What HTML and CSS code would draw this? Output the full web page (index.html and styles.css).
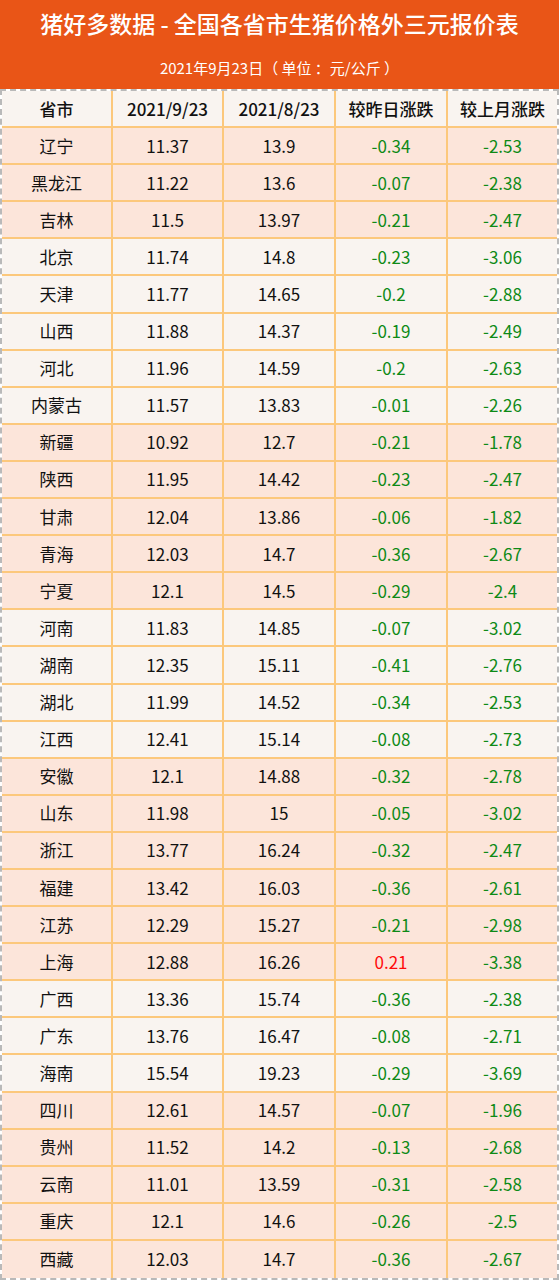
FILE: index.html
```html
<!DOCTYPE html>
<html lang="zh-CN">
<head>
<meta charset="utf-8">
<title>猪好多数据 - 全国各省市生猪价格外三元报价表</title>
<link rel="stylesheet" href="styles.css">
</head>
<body>
<div class="page">
  <header class="banner">
    <h1 class="title">猪好多数据 - 全国各省市生猪价格外三元报价表</h1>
    <p class="subtitle">2021年9月23日（ 单位 ：元/公斤 ）</p>
  </header>
  <div class="table">
    <div class="row head"><div class="cell">省市</div><div class="cell">2021/9/23</div><div class="cell">2021/8/23</div><div class="cell">较昨日涨跌</div><div class="cell">较上月涨跌</div></div>
    <div class="row pink"><div class="cell">辽宁</div><div class="cell">11.37</div><div class="cell">13.9</div><div class="cell down">-0.34</div><div class="cell down">-2.53</div></div>
    <div class="row pink"><div class="cell">黑龙江</div><div class="cell">11.22</div><div class="cell">13.6</div><div class="cell down">-0.07</div><div class="cell down">-2.38</div></div>
    <div class="row pink"><div class="cell">吉林</div><div class="cell">11.5</div><div class="cell">13.97</div><div class="cell down">-0.21</div><div class="cell down">-2.47</div></div>
    <div class="row light"><div class="cell">北京</div><div class="cell">11.74</div><div class="cell">14.8</div><div class="cell down">-0.23</div><div class="cell down">-3.06</div></div>
    <div class="row light"><div class="cell">天津</div><div class="cell">11.77</div><div class="cell">14.65</div><div class="cell down">-0.2</div><div class="cell down">-2.88</div></div>
    <div class="row light"><div class="cell">山西</div><div class="cell">11.88</div><div class="cell">14.37</div><div class="cell down">-0.19</div><div class="cell down">-2.49</div></div>
    <div class="row light"><div class="cell">河北</div><div class="cell">11.96</div><div class="cell">14.59</div><div class="cell down">-0.2</div><div class="cell down">-2.63</div></div>
    <div class="row light"><div class="cell">内蒙古</div><div class="cell">11.57</div><div class="cell">13.83</div><div class="cell down">-0.01</div><div class="cell down">-2.26</div></div>
    <div class="row pink"><div class="cell">新疆</div><div class="cell">10.92</div><div class="cell">12.7</div><div class="cell down">-0.21</div><div class="cell down">-1.78</div></div>
    <div class="row pink"><div class="cell">陕西</div><div class="cell">11.95</div><div class="cell">14.42</div><div class="cell down">-0.23</div><div class="cell down">-2.47</div></div>
    <div class="row pink"><div class="cell">甘肃</div><div class="cell">12.04</div><div class="cell">13.86</div><div class="cell down">-0.06</div><div class="cell down">-1.82</div></div>
    <div class="row pink"><div class="cell">青海</div><div class="cell">12.03</div><div class="cell">14.7</div><div class="cell down">-0.36</div><div class="cell down">-2.67</div></div>
    <div class="row pink"><div class="cell">宁夏</div><div class="cell">12.1</div><div class="cell">14.5</div><div class="cell down">-0.29</div><div class="cell down">-2.4</div></div>
    <div class="row light"><div class="cell">河南</div><div class="cell">11.83</div><div class="cell">14.85</div><div class="cell down">-0.07</div><div class="cell down">-3.02</div></div>
    <div class="row light"><div class="cell">湖南</div><div class="cell">12.35</div><div class="cell">15.11</div><div class="cell down">-0.41</div><div class="cell down">-2.76</div></div>
    <div class="row light"><div class="cell">湖北</div><div class="cell">11.99</div><div class="cell">14.52</div><div class="cell down">-0.34</div><div class="cell down">-2.53</div></div>
    <div class="row light"><div class="cell">江西</div><div class="cell">12.41</div><div class="cell">15.14</div><div class="cell down">-0.08</div><div class="cell down">-2.73</div></div>
    <div class="row pink"><div class="cell">安徽</div><div class="cell">12.1</div><div class="cell">14.88</div><div class="cell down">-0.32</div><div class="cell down">-2.78</div></div>
    <div class="row pink"><div class="cell">山东</div><div class="cell">11.98</div><div class="cell">15</div><div class="cell down">-0.05</div><div class="cell down">-3.02</div></div>
    <div class="row pink"><div class="cell">浙江</div><div class="cell">13.77</div><div class="cell">16.24</div><div class="cell down">-0.32</div><div class="cell down">-2.47</div></div>
    <div class="row pink"><div class="cell">福建</div><div class="cell">13.42</div><div class="cell">16.03</div><div class="cell down">-0.36</div><div class="cell down">-2.61</div></div>
    <div class="row pink"><div class="cell">江苏</div><div class="cell">12.29</div><div class="cell">15.27</div><div class="cell down">-0.21</div><div class="cell down">-2.98</div></div>
    <div class="row pink"><div class="cell">上海</div><div class="cell">12.88</div><div class="cell">16.26</div><div class="cell up">0.21</div><div class="cell down">-3.38</div></div>
    <div class="row light"><div class="cell">广西</div><div class="cell">13.36</div><div class="cell">15.74</div><div class="cell down">-0.36</div><div class="cell down">-2.38</div></div>
    <div class="row light"><div class="cell">广东</div><div class="cell">13.76</div><div class="cell">16.47</div><div class="cell down">-0.08</div><div class="cell down">-2.71</div></div>
    <div class="row light"><div class="cell">海南</div><div class="cell">15.54</div><div class="cell">19.23</div><div class="cell down">-0.29</div><div class="cell down">-3.69</div></div>
    <div class="row pink"><div class="cell">四川</div><div class="cell">12.61</div><div class="cell">14.57</div><div class="cell down">-0.07</div><div class="cell down">-1.96</div></div>
    <div class="row pink"><div class="cell">贵州</div><div class="cell">11.52</div><div class="cell">14.2</div><div class="cell down">-0.13</div><div class="cell down">-2.68</div></div>
    <div class="row pink"><div class="cell">云南</div><div class="cell">11.01</div><div class="cell">13.59</div><div class="cell down">-0.31</div><div class="cell down">-2.58</div></div>
    <div class="row pink"><div class="cell">重庆</div><div class="cell">12.1</div><div class="cell">14.6</div><div class="cell down">-0.26</div><div class="cell down">-2.5</div></div>
    <div class="row pink"><div class="cell">西藏</div><div class="cell">12.03</div><div class="cell">14.7</div><div class="cell down">-0.36</div><div class="cell down">-2.67</div></div>
  </div>
</div>
</body>
</html>
```

FILE: styles.css
```css
* {
  box-sizing: border-box;
}
html, body {
  margin: 0;
  padding: 0;
  background: #ffffff;
}
body {
  font-family: "Noto Sans CJK SC", "Noto Sans", sans-serif;
  color: #111111;
}
.page {
  width: 559px;
}
.banner {
  height: 89px;
  background: #e95517;
  display: flex;
  flex-direction: column;
  align-items: center;
  color: #ffffff;
}
.title {
  margin: 8px 0 0 0;
  font-size: 23px;
  line-height: 30px;
  font-weight: 500;
  white-space: nowrap;
}
.subtitle {
  margin: 20px 0 0 0;
  font-size: 15px;
  line-height: 20px;
  font-weight: 400;
  white-space: nowrap;
}
.table {
  border: 2px dashed #b9b9b9;
  display: flex;
  flex-direction: column;
}
.row {
  display: grid;
  grid-template-columns: 111px 111px 112px 112px 1fr;
  height: 37.1px;
  border-bottom: 2px solid #fcc87c;
}
.row:last-child {
  border-bottom: none;
}
.row.head {
  background: #f9f4f0;
  font-weight: 500;
}
.row.pink {
  background: #fce5da;
}
.row.light {
  background: #f9f4f0;
}
.cell {
  display: flex;
  align-items: center;
  justify-content: center;
  font-size: 17px;
  line-height: 20px;
  border-right: 2px solid #fcc87c;
  white-space: nowrap;
}
.cell:last-child {
  border-right: none;
}
.cell.down {
  color: #0e8a16;
}
.cell.up {
  color: #ff0a0a;
}
```
